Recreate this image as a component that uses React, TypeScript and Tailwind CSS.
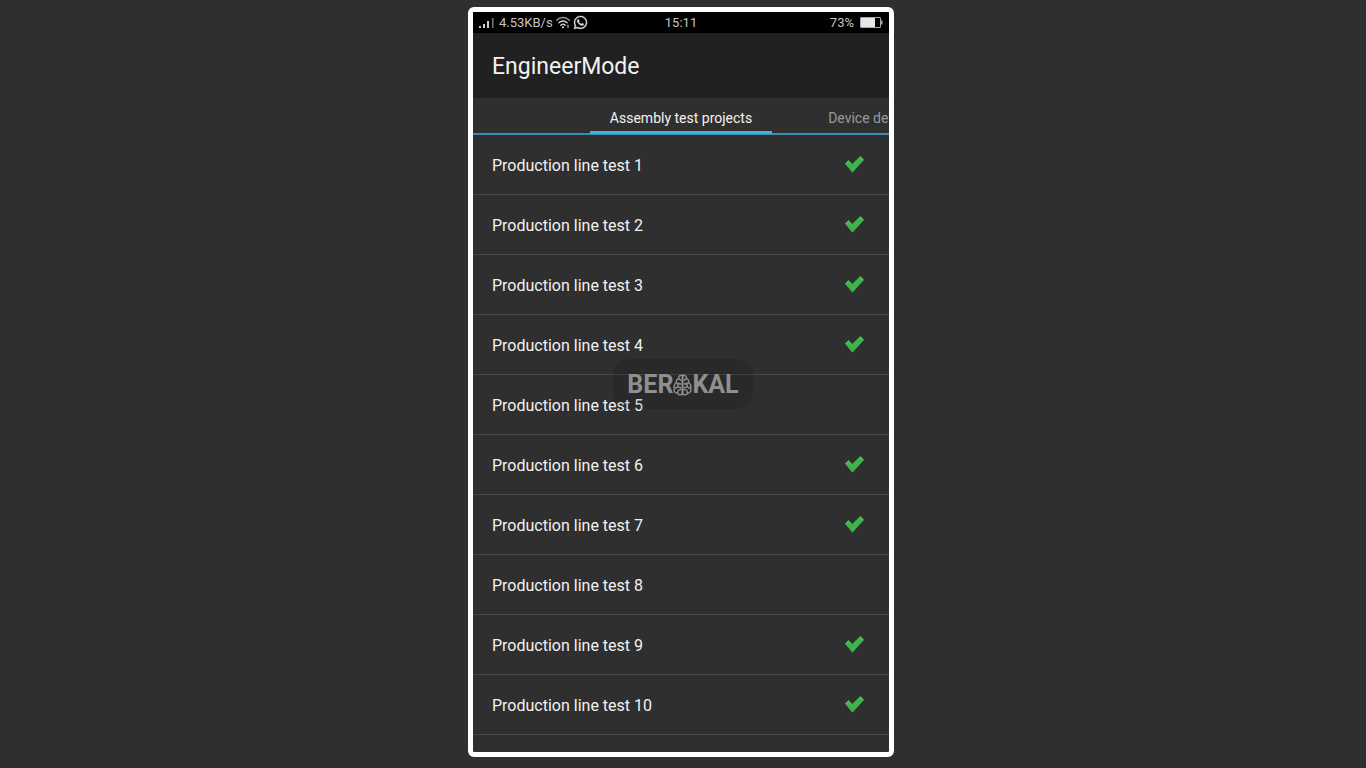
import React, { useState } from 'react';
import { FaWhatsapp } from 'react-icons/fa';

interface TestProject {
  id: number;
  passed: boolean;
}

const TESTS: TestProject[] = [
  { id: 1, passed: true },
  { id: 2, passed: true },
  { id: 3, passed: true },
  { id: 4, passed: true },
  { id: 5, passed: false },
  { id: 6, passed: true },
  { id: 7, passed: true },
  { id: 8, passed: false },
  { id: 9, passed: true },
  { id: 10, passed: true },
];

const SignalIcon = () => (
  <svg width="17" height="12" viewBox="0 0 17 12" aria-hidden="true">
    <path d="M0 9h2v2H0zM4 7h2v4H4zM8 4h2v7H8z" fill="#d0d0d0" />
    <path d="M13 1h1.6v10H13z" fill="#747474" />
  </svg>
);

const WifiIcon = () => (
  <svg width="14" height="13" viewBox="0 0 14 13" fill="none" strokeLinecap="round" aria-hidden="true">
    <path d="M.8 4.2C4.2.6 9.8.6 13.2 4.2" stroke="#9a9a9a" strokeWidth="1.4" />
    <path d="M2.8 6.8c2.4-2.5 6-2.5 8.4 0" stroke="#c8c8c8" strokeWidth="1.4" />
    <path d="M4.8 9.2c1.2-1.3 3.2-1.3 4.4 0" stroke="#c8c8c8" strokeWidth="1.4" />
    <circle cx="7" cy="11.3" r="1.1" fill="#d0d0d0" />
    <path d="M12 9.2v2.4" stroke="#9a9a9a" strokeWidth="1.4" />
  </svg>
);

const BatteryIcon = () => (
  <svg width="23" height="12" viewBox="0 0 23 12" aria-hidden="true">
    <rect x="0.5" y="0.5" width="20" height="10" rx="0.5" fill="none" stroke="#a8a8a8" />
    <rect x="1" y="1" width="14" height="9" fill="#e6e6e6" />
    <rect x="21" y="3.5" width="1.5" height="4" fill="#a8a8a8" />
  </svg>
);

const CheckIcon = () => (
  <svg width="19" height="17" viewBox="0 0 19 17" role="img" aria-label="Passed">
    <path
      d="M.4 7.6 3.6 4.6 7.3 8.3 15.3.5 18.7 3.8 7.4 16.2Z"
      fill="#3db54a"
      stroke="#3db54a"
      strokeWidth="0.8"
      strokeLinejoin="round"
    />
    <path d="M1.6 7.4 3.6 5.6M15.4 1.7 17.2 3.4" stroke="#6fae68" strokeWidth="1.6" strokeLinecap="round" />
  </svg>
);

// Brain mark that stands in for the letter O
const BrainIcon = () => (
  <svg width="19" height="22" viewBox="0 0 19 22" fill="none" stroke="currentColor" strokeWidth="1.4" strokeLinecap="round" aria-hidden="true">
    <path d="M9 1.4C6.8.8 5.6 2.6 5.4 4.4 3.6 5.2 3 7 3.2 8.8 1.2 10.2.8 12.4 1.4 14.2.4 16.8 1.8 19 4.2 19.2c1 1.8 3.4 2 4.8.8" />
    <path d="M10 1.4c2.2-.6 3.4 1.2 3.6 3 1.8.8 2.4 2.6 2.2 4.4 2 1.4 2.4 3.6 1.8 5.4 1 2.6-.4 4.8-2.8 5-1 1.8-3.4 2-4.8.8" />
    <path d="M9.5 1.5v19" strokeWidth="2" />
    <path d="M5.4 4.4 7.6 6.2M3.4 8.8l4.2 1.2M5.4 9.2 4.6 12M1.8 14.4l3.2-1.6 2.8 1M4.6 18.8l.6-2.6 2.8-.8" />
    <path d="M13.6 4.4 11.4 6.2M15.6 8.8 11.4 10M13.6 9.2l.8 2.8M17.2 14.4 14 12.8l-2.8 1M14.4 18.8l-.6-2.6-2.8-.8" />
  </svg>
);

const StatusBar = () => (
  <div className="grid h-[21px] shrink-0 grid-cols-[1fr_auto_1fr] items-center bg-black px-[6px] text-[13px] leading-5 text-[#c4c4c4]">
    <div className="flex items-center gap-[3px]">
      <SignalIcon />
      <span>4.53KB/s</span>
      <WifiIcon />
      <FaWhatsapp size={15} strokeWidth={12} className="text-[#e0e0e0]" />
    </div>
    <time>15:11</time>
    <div className="flex items-center justify-end gap-[6px]">
      <span>73%</span>
      <BatteryIcon />
    </div>
  </div>
);

const App: React.FC = () => {
  const [activeTab, setActiveTab] = useState('assembly');

  return (
    <div className="flex min-h-screen justify-center bg-[#2f2f2f] pt-[7px] pr-1 pb-[11px] font-[Roboto,sans-serif]">
      <main className="relative flex w-full max-w-[426px] flex-col overflow-hidden rounded-md border-5 border-white bg-[#302f2f] text-[#f2f2f2]">
        <StatusBar />

        <header className="flex h-[65px] shrink-0 items-center bg-[#212121] px-[19px] pt-[3px]">
          <h1 className="text-[23px] leading-8">EngineerMode</h1>
        </header>

        {/* Tabs */}
        <nav className="grid h-[37px] shrink-0 grid-cols-[1fr_auto_1fr] border-b-2 border-[#3c8cb0] bg-[#2f2f2f] text-sm">
          <span />
          <button
            onClick={() => setActiveTab('assembly')}
            aria-pressed={activeTab === 'assembly'}
            className="-mb-px border-b-3 border-[#3fb0dd] px-5 pt-[6px] whitespace-nowrap"
          >
            Assembly test projects
          </button>
          <button
            onClick={() => setActiveTab('device')}
            aria-pressed={activeTab === 'device'}
            className="min-w-0 overflow-hidden pt-1 pl-14 text-left whitespace-nowrap text-[#9a9a9a]"
          >
            Device de
          </button>
        </nav>

        {/* Test list */}
        <ul>
          {TESTS.map((test) => (
            <li key={test.id} className="border-b border-[#4a4949]">
              <button className="flex h-[59px] w-full items-center justify-between pr-[25px] pl-[19px] text-left text-base">
                <span className="pt-[2px]">Production line test {test.id}</span>
                {test.passed && <CheckIcon />}
              </button>
            </li>
          ))}
        </ul>

        {/* Watermark */}
        <div className="pointer-events-none absolute inset-0 flex items-center justify-center pt-1 pl-1">
          <div className="flex h-[50px] w-[140px] items-center justify-center rounded-2xl bg-black/12 pt-[2px] text-[25px] leading-6 font-bold text-[#8f8f8f]">
            <span>BER</span>
            <BrainIcon />
            <span>KAL</span>
          </div>
        </div>
      </main>
    </div>
  );
};

export default App;
